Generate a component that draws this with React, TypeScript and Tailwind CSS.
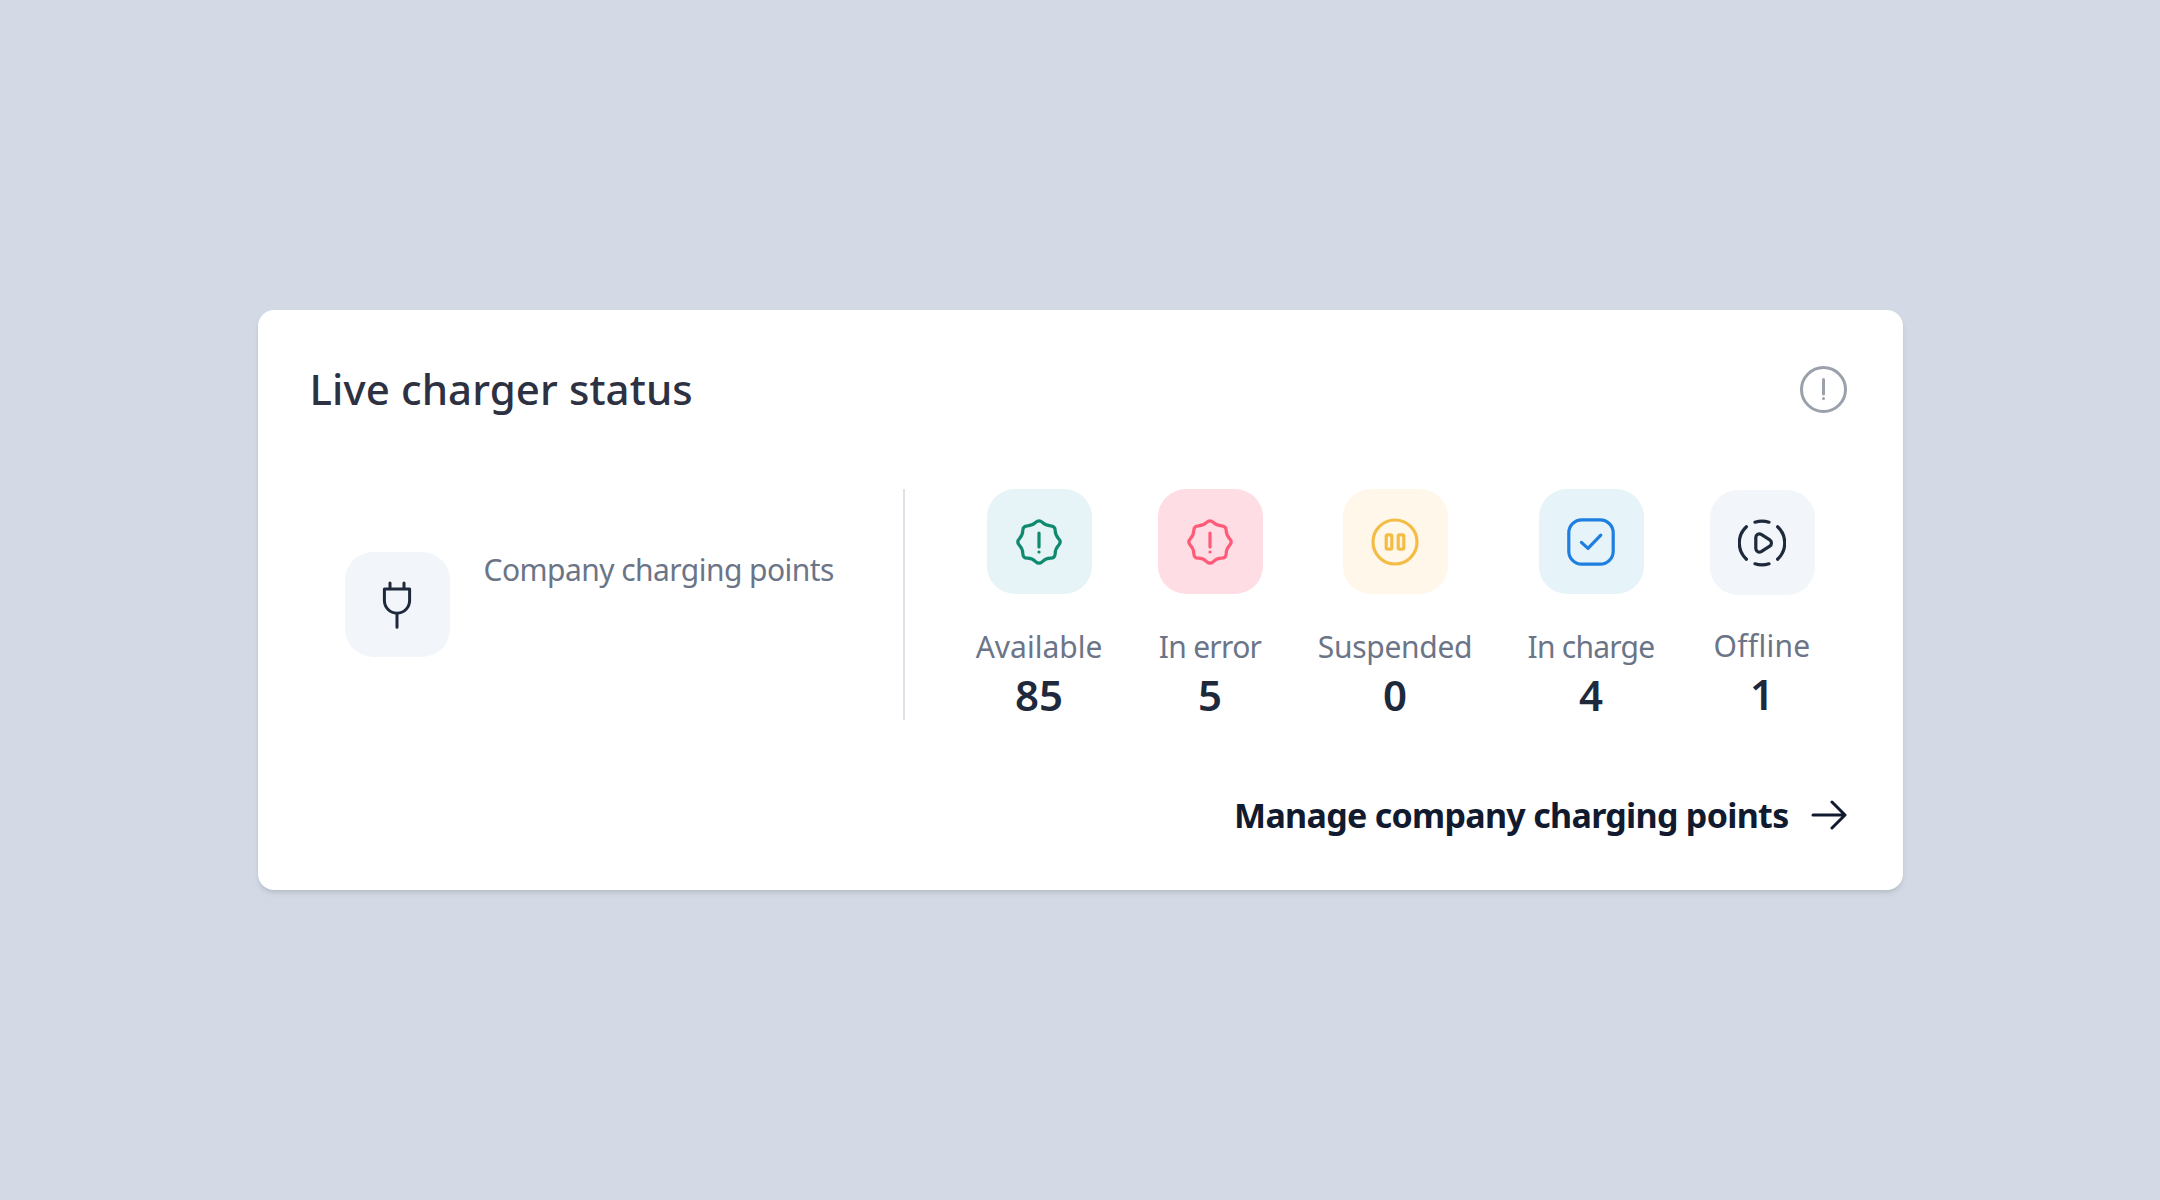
import React from 'react';

const font = { fontFamily: '"Noto Sans", sans-serif' };

// wavy eight-lobed outline, peaks on the compass points
const badgePath = (() => {
  const pts = Array.from({ length: 16 }, (_, i) => {
    const r = i % 2 === 0 ? 11.4 : 8.8;
    const a = (i * Math.PI) / 8 - Math.PI / 2;
    return [12 + r * Math.cos(a), 12 + r * Math.sin(a)];
  });
  const mid = (a: number[], b: number[]) => [(a[0] + b[0]) / 2, (a[1] + b[1]) / 2];
  const start = mid(pts[15], pts[0]);
  let d = `M${start[0].toFixed(2)} ${start[1].toFixed(2)}`;
  pts.forEach((p, i) => {
    const m = mid(p, pts[(i + 1) % 16]);
    d += `Q${p[0].toFixed(2)} ${p[1].toFixed(2)} ${m[0].toFixed(2)} ${m[1].toFixed(2)}`;
  });
  return d + 'Z';
})();

const Badge = () => (
  <>
    <path d={badgePath} />
    <line x1="12" y1="7.5" x2="12" y2="14.5" />
    <line x1="12" y1="17" x2="12.01" y2="17" />
  </>
);

const Pause = () => (
  <>
    <circle cx="12" cy="12" r="11" />
    <rect x="7.6" y="8.4" width="2.8" height="7.2" rx="0.7" />
    <rect x="13.6" y="8.4" width="2.8" height="7.2" rx="0.7" />
  </>
);

const Check = () => (
  <>
    <rect x="0.9" y="0.9" width="22.2" height="22.2" rx="6.5" />
    <path d="M7.2 12.2l3.3 3 6.4-6.6" />
  </>
);

const Play = () => (
  <>
    <path d="M8.5 1.6a11 11 0 0 1 7 0" />
    <path d="M19.8 3.9a11 11 0 0 1 0 16.2" />
    <path d="M4.2 3.9a11 11 0 0 0 0 16.2" />
    <path d="M8.5 22.4a11 11 0 0 0 7 0" />
    <path d="M8.9 9.2c0-1.4 1.5-2.2 2.7-1.5l4.3 2.7c1.1.7 1.1 2.5 0 3.2l-4.3 2.7c-1.2.7-2.7-.1-2.7-1.5Z" />
  </>
);

const items = [
  { id: 1, label: 'Available', value: 85, width: 'w-[127px]', bg: 'bg-[#e6f3f7]', color: 'text-[#0f8a6f]', box: '', text: 'mt-[31px] tracking-[0px]', icon: <Badge /> },
  { id: 2, label: 'In error', value: 5, width: 'w-[105px]', bg: 'bg-[#fedde4]', color: 'text-[#ff5a78]', box: '', text: 'mt-[31px] tracking-[-0.7px]', icon: <Badge /> },
  { id: 3, label: 'Suspended', value: 0, width: 'w-[155px]', bg: 'bg-[#fff8ea]', color: 'text-[#f5bc45]', box: '', text: 'mt-[31px] tracking-[-0.3px]', icon: <Pause /> },
  { id: 4, label: 'In charge', value: 4, width: 'w-[127px]', bg: 'bg-[#e6f3f8]', color: 'text-[#1e7fe0]', box: '', text: 'mt-[31px] tracking-[-0.75px]', icon: <Check /> },
  { id: 5, label: 'Offline', value: 1, width: 'w-[105px]', bg: 'bg-[#f2f6fa]', color: 'text-[#1e293b]', box: 'mt-px', text: 'mt-[29px] tracking-[0.3px]', icon: <Play /> },
];

const App: React.FC = () => {
  return (
    <div style={font} className="h-[1200px] bg-[#d3dae6] flex items-center justify-center">
      <div className="w-[1645px] h-[580px] bg-white rounded-[16px] shadow-md pt-[52px] pl-[52px] pr-[56px] flex flex-col">
        <div className="flex justify-between items-center h-[54px]">
          <h2 className="text-[42px] font-medium text-[#2d3142] tracking-[0.1px] pb-[2px]">Live charger status</h2>
          <svg width="47" height="47" viewBox="0 0 47 47" fill="none" stroke="#9aa1ab" strokeWidth="3" strokeLinecap="round">
            <circle cx="23.5" cy="23.5" r="22" />
            <line x1="23.5" y1="13.5" x2="23.5" y2="28" />
            <line x1="23.5" y1="32.5" x2="23.5" y2="32.6" />
          </svg>
        </div>

        <div className="flex mt-[73px] h-[231px]">
          <div className="w-[595px] pl-[35px] flex items-center gap-[34px] border-r-2 border-[#dde1e8]">
            <div className="w-[105px] h-[105px] rounded-[28px] bg-[#f2f6fa] flex items-center justify-center text-[#1e293b]">
              <svg width="48" height="48" viewBox="0 0 24 24" fill="none" stroke="currentColor" strokeWidth="1.5" strokeLinecap="round" strokeLinejoin="round">
                <path d="M8.5 1v3M15.5 1v3M5.7 4h12.6v5.8a6.3 6.3 0 0 1-12.6 0ZM12 16.1v7" />
              </svg>
            </div>
            <span className="text-[30px] text-[#6b7587] tracking-[-0.55px] self-start mt-[58px]">Company charging points</span>
          </div>
          <div className="flex gap-[55px] ml-[71px]">
            {items.map((item) => (
              <div key={item.id} className={`${item.width} flex flex-col items-center`}>
                <div className={`w-[105px] h-[105px] rounded-[28px] flex items-center justify-center ${item.box} ${item.bg} ${item.color}`}>
                  <svg width="48" height="48" viewBox="0 0 24 24" fill="none" stroke="currentColor" strokeWidth="1.6" strokeLinecap="round" strokeLinejoin="round">
                    {item.icon}
                  </svg>
                </div>
                <span className={`${item.text} text-[30px] leading-[44px] text-[#6b7587] whitespace-nowrap`}>{item.label}</span>
                <span className="text-[42px] leading-[51px] font-semibold text-[#1e293b]">{item.value}</span>
              </div>
            ))}
          </div>
        </div>

        <div className="flex justify-end items-center gap-[22px] mt-[75px] h-[40px]">
          <span className="text-[34px] font-bold text-[#111a2e] tracking-[-0.7px]">Manage company charging points</span>
          <svg width="36" height="36" viewBox="0 0 36 36" fill="none" stroke="#111a2e" strokeWidth="3" strokeLinecap="round" strokeLinejoin="round">
            <path d="M2 18h32M21 5l13 13-13 13" />
          </svg>
        </div>
      </div>
    </div>
  );
};

export default App;
